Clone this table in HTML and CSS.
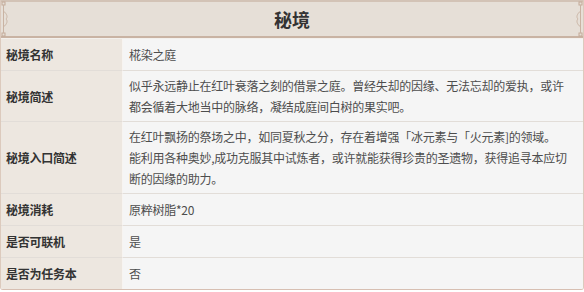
FILE: index.html
```html
<!DOCTYPE html>
<html lang="zh-CN">
<head>
<meta charset="utf-8">
<title>秘境</title>
<link rel="stylesheet" href="styles.css">
</head>
<body>
<div class="card">
  <div class="head">
    <svg class="orn orn-left" width="10" height="38" viewBox="0 0 10 38">
      <rect x="1" y="2" width="3" height="3" fill="none" stroke="#c3aa98" stroke-width="1"/>
      <rect x="1" y="33" width="3" height="3" fill="none" stroke="#c3aa98" stroke-width="1"/>
      <line x1="2.5" y1="5" x2="2.5" y2="33" stroke="#c9b3a3" stroke-width="1"/>
      <path d="M2.5 11 C6 14 7 17 5 19 C7 21 6 24 2.5 27" fill="none" stroke="#cbb6a6" stroke-width="1"/>
    </svg>
    <h1 class="title">秘境</h1>
    <svg class="orn orn-right" width="10" height="38" viewBox="0 0 10 38">
      <rect x="6" y="2" width="3" height="3" fill="none" stroke="#c3aa98" stroke-width="1"/>
      <rect x="6" y="33" width="3" height="3" fill="none" stroke="#c3aa98" stroke-width="1"/>
      <line x1="7.5" y1="5" x2="7.5" y2="33" stroke="#c9b3a3" stroke-width="1"/>
      <path d="M7.5 11 C4 14 3 17 5 19 C3 21 4 24 7.5 27" fill="none" stroke="#cbb6a6" stroke-width="1"/>
    </svg>
  </div>
  <div class="rows">
    <div class="label single">秘境名称</div>
    <div class="value single">椛染之庭</div>

    <div class="label">秘境简述</div>
    <div class="value">似乎永远静止在红叶衰落之刻的借景之庭。曾经失却的因缘、无法忘却的爱执，或许<br>都会循着大地当中的脉络，凝结成庭间白树的果实吧。</div>

    <div class="label">秘境入口简述</div>
    <div class="value">在红叶飘扬的祭场之中，如同夏秋之分，存在着增强「冰元素与「火元素]的领域。<br>能利用各种奥妙,成功克服其中试炼者，或许就能获得珍贵的圣遗物，获得追寻本应切<br>断的因缘的助力。</div>

    <div class="label single">秘境消耗</div>
    <div class="value single">原粹树脂*20</div>

    <div class="label single">是否可联机</div>
    <div class="value single">是</div>

    <div class="label single last">是否为任务本</div>
    <div class="value single last">否</div>
  </div>
</div>
</body>
</html>
```
FILE: styles.css
```css
html, body {
  margin: 0;
  padding: 0;
  background: #ffffff;
}

body {
  font-family: "Noto Sans CJK SC", "Noto Sans", sans-serif;
  font-size: 12px;
}

.card {
  width: 582px;
  border-left: 1px solid #dccabd;
  border-right: 1px solid #dccabd;
  border-bottom: 1px solid #d7bfb2;
  border-radius: 0 0 3px 3px;
  overflow: hidden;
}

.head {
  position: relative;
  height: 34px;
  background: #e6dfd7;
  border-top: 2px solid #d3c3b6;
  border-bottom: 2px solid #c9b3a3;
  display: flex;
  align-items: center;
  justify-content: center;
}

.orn {
  position: absolute;
  top: -2px;
}

.orn-left { left: 0; }
.orn-right { right: 0; }

.title {
  margin: 0;
  font-size: 18px;
  font-weight: 700;
  color: #333333;
  line-height: 1;
}

.rows {
  display: grid;
  grid-template-columns: 121px 1fr;
  border-top: 1px solid #f3f0ec;
}

.label,
.value {
  border-bottom: 1px solid #e2ddd8;
  line-height: 21px;
  padding-top: 4px;
  padding-bottom: 4px;
  letter-spacing: -0.25px;
}

.label.single,
.value.single {
  line-height: 20px;
  padding-top: 5.5px;
  padding-bottom: 5.5px;
}

.label {
  background: #ede7e0;
  color: #333333;
  font-weight: 700;
  padding-left: 5px;
  padding-right: 5px;
  display: flex;
  align-items: center;
}

.value {
  background: #f5f5f5;
  color: #4d4d4d;
  padding-left: 6px;
  padding-right: 6px;
  border-left: 1px solid #f7f4f1;
  white-space: nowrap;
}

.label.last,
.value.last {
  border-bottom: none;
}
```
